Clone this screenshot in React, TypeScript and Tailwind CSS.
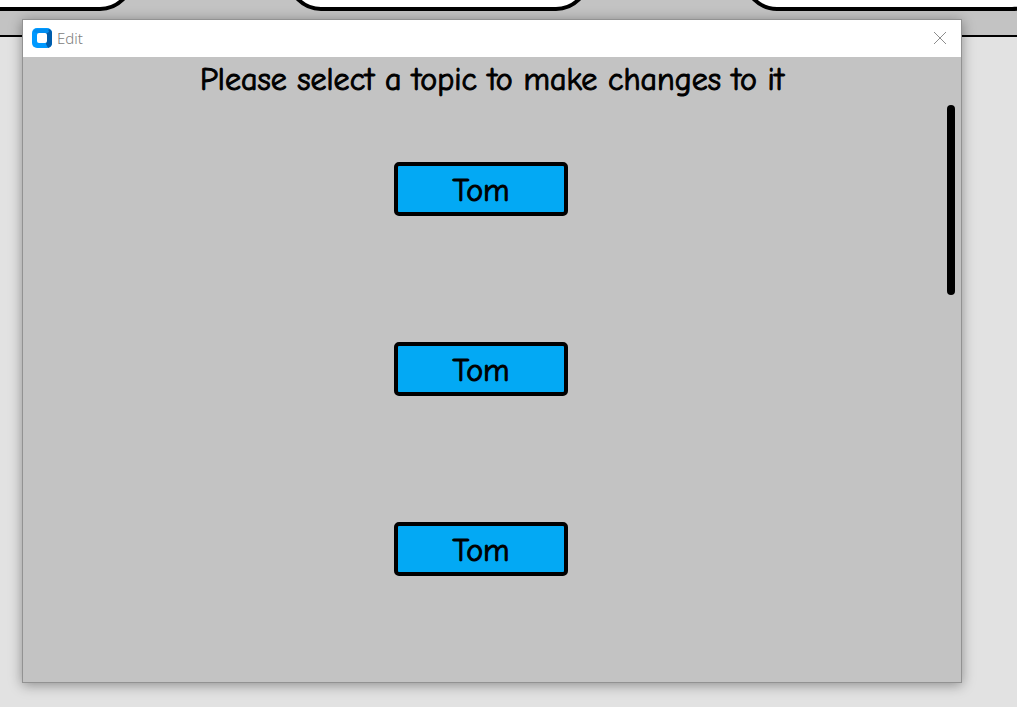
import React from "react";

const topics = ["Tom", "Tom", "Tom"];

function AppIcon() {
  return (
    <svg viewBox="0 0 20 20" className="h-5 w-5 shrink-0" aria-hidden="true">
      <rect width="20" height="20" rx="5" fill="#0099ff" />
      <path d="M14 4 17 1Q20 2 20 5V15Q20 19 16 20L14 16Z" fill="#005cab" />
      <path d="M4 1H16L17 4 15 5H5L1 4Q2 1 4 1Z" fill="#008df0" />
      <rect x="5" y="5" width="10" height="10" rx="2" fill="#ffffff" />
    </svg>
  );
}

function Backdrop() {
  return (
    <div className="flex h-[37px] items-end justify-start gap-[153px] overflow-hidden border-b-2 border-black bg-[#c3c3c3]">
      {[0, 1, 2].map((card) => (
        <div
          key={card}
          className="mb-6 h-24 w-[303px] shrink-0 rounded-[34px] border-4 border-black bg-white first:-ml-[169px]"
        />
      ))}
    </div>
  );
}

function TopicList() {
  return (
    <div className="flex flex-1 items-start pt-1 pr-1.5">
      <ul className="flex flex-1 flex-col items-center gap-[126px] pt-[57px] pr-2">
        {topics.map((topic, index) => (
          <li key={index} className="flex">
            <button
              type="button"
              className="flex h-[54px] w-[174px] items-center justify-center rounded-[5px] border-4 border-black bg-[#03a9f4] pt-1 text-[32px] leading-8 text-black"
            >
              {topic}
            </button>
          </li>
        ))}
      </ul>
      <div className="h-[190px] w-2 rounded-full bg-black" />
    </div>
  );
}

export default function App() {
  return (
    <div className="relative min-h-screen overflow-hidden bg-[#e2e2e2]">
      <Backdrop />
      <section
        role="dialog"
        aria-labelledby="window-title"
        className="absolute top-[19px] right-[55px] bottom-6 left-[22px] flex flex-col border border-[#929292] bg-[#c3c3c3] shadow-[0_2px_12px_rgba(0,0,0,0.38)]"
      >
        <header className="flex h-[37px] shrink-0 items-center bg-white pb-px pl-[9px]">
          <AppIcon />
          <h1
            id="window-title"
            className="ml-[5px] flex-1 font-['Noto_Sans','Open_Sans',sans-serif] text-[15px] leading-5 font-light text-[#808080]"
          >
            Edit
          </h1>
          <button type="button" aria-label="Close" className="flex h-9 w-[42px] items-center justify-center">
            <svg viewBox="0 0 12 12" className="h-3 w-3" aria-hidden="true">
              <path d="M0 0 12 12M12 0 0 12" stroke="#8d8d8d" fill="none" />
            </svg>
          </button>
        </header>
        <main className="flex flex-1 flex-col font-['Comic_Sans_MS','Comic_Neue','Noto_Sans',sans-serif] text-black [-webkit-text-stroke:1px_black]">
          <h2 className="h-11 text-center text-[32px] leading-[46px] whitespace-nowrap">
            Please select a topic to make changes to it
          </h2>
          <TopicList />
        </main>
      </section>
    </div>
  );
}
